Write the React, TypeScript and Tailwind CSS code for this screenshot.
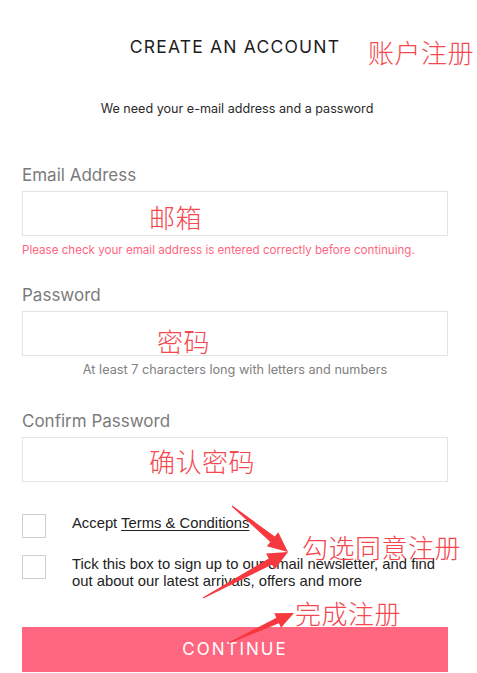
import React from 'react'

type Pt = [number, number]

// tapered arrow polygon: thin tail, wide shaft near the head, triangle head
function arrowPoints(tail: Pt, tip: Pt, head = 20, headW = 9, shaftW = 3.5, tailW = 0.6) {
  const dx = tip[0] - tail[0]
  const dy = tip[1] - tail[1]
  const len = Math.hypot(dx, dy)
  const ux = dx / len
  const uy = dy / len
  const nx = -uy
  const ny = ux
  const base: Pt = [tip[0] - ux * head, tip[1] - uy * head]
  const p = (o: Pt, w: number): string => `${o[0] + nx * w},${o[1] + ny * w}`
  return [
    p(tail, tailW),
    p(base, shaftW),
    p(base, headW),
    `${tip[0]},${tip[1]}`,
    p(base, -headW),
    p(base, -shaftW),
    p(tail, -tailW),
  ].join(' ')
}

const NOTE = "absolute text-[#f5474f] text-[26px] leading-[30px] font-light tracking-[0.5px] [font-family:'Noto_Sans_CJK_SC',sans-serif]"

function Field({ label, children }: { label: string; children?: React.ReactNode }) {
  return (
    <div>
      <div className="text-[17px] leading-[20px] text-[#7b7b7b]">{label}</div>
      <div className="mt-[6px] h-[45px] border border-[#e4e4e4] bg-white" />
      {children}
    </div>
  )
}

export default function App() {
  return (
    <div className="relative min-h-screen w-full overflow-hidden bg-white text-[#222] [font-family:Inter,Lato,sans-serif]">
      <div className="px-[22px] w-[470px]">
        <h1 className="mt-[36px] text-center text-[17.5px] leading-[22px] tracking-[1.2px] text-[#1c1c1c]">
          CREATE AN ACCOUNT
        </h1>
        <p className="mt-[43px] text-center text-[12.6px] leading-[16px] text-[#2a2a2a] pl-[4px]">
          We need your e-mail address and a password
        </p>

        <div className="mt-[48px]">
          <Field label="Email Address">
            <p className="mt-[7px] text-[11.6px] leading-[14px] text-[#ff6680]">
              Please check your email address is entered correctly before continuing.
            </p>
          </Field>
        </div>

        <div className="mt-[28px]">
          <Field label="Password">
            <p className="mt-[7px] text-center text-[12.7px] leading-[14px] text-[#808080]">
              At least 7 characters long with letters and numbers
            </p>
          </Field>
        </div>

        <div className="mt-[34px]">
          <Field label="Confirm Password" />
        </div>

        <div className="mt-[32px] flex flex-col gap-[17px] [font-family:'Liberation_Sans',Arial,sans-serif]">
          <label className="flex items-start gap-[26px]">
            <span className="h-[24px] w-[24px] shrink-0 border border-[#cfcfcf]" />
            <span className="pt-[1px] text-[14.8px] leading-[17px]">
              Accept <span className="underline underline-offset-[2px]">Terms &amp; Conditions</span>
            </span>
          </label>
          <label className="flex items-start gap-[26px]">
            <span className="h-[24px] w-[24px] shrink-0 border border-[#cfcfcf]" />
            <span className="pt-[1px] text-[14.8px] leading-[17px] w-[372px]">
              Tick this box to sign up to our email newsletter, and find out about our latest arrivals, offers and more
            </span>
          </label>
        </div>

        <button
          type="button"
          className="mt-[37px] flex h-[45px] w-full items-center justify-center bg-[#ff6680] text-[17px] tracking-[2px] text-white"
        >
          CONTINUE
        </button>
      </div>

      {/* annotations */}
      <span className={NOTE} style={{ left: 368, top: 37 }}>账户注册</span>
      <span className={NOTE} style={{ left: 149, top: 202 }}>邮箱</span>
      <span className={NOTE} style={{ left: 157, top: 326 }}>密码</span>
      <span className={NOTE} style={{ left: 149, top: 446 }}>确认密码</span>
      <span className={NOTE} style={{ left: 302, top: 532 }}>勾选同意注册</span>
      <span className={NOTE} style={{ left: 295, top: 598 }}>完成注册</span>

      <svg className="pointer-events-none absolute left-0 top-0" width="477" height="673">
        <polygon points={arrowPoints([232, 506], [288, 552])} fill="#f5393f" />
        <polygon points={arrowPoints([203, 598], [288, 552])} fill="#f5393f" />
        <polygon points={arrowPoints([229, 643], [294, 613], 18, 8, 3, 0.6)} fill="#f5393f" />
      </svg>
    </div>
  )
}
